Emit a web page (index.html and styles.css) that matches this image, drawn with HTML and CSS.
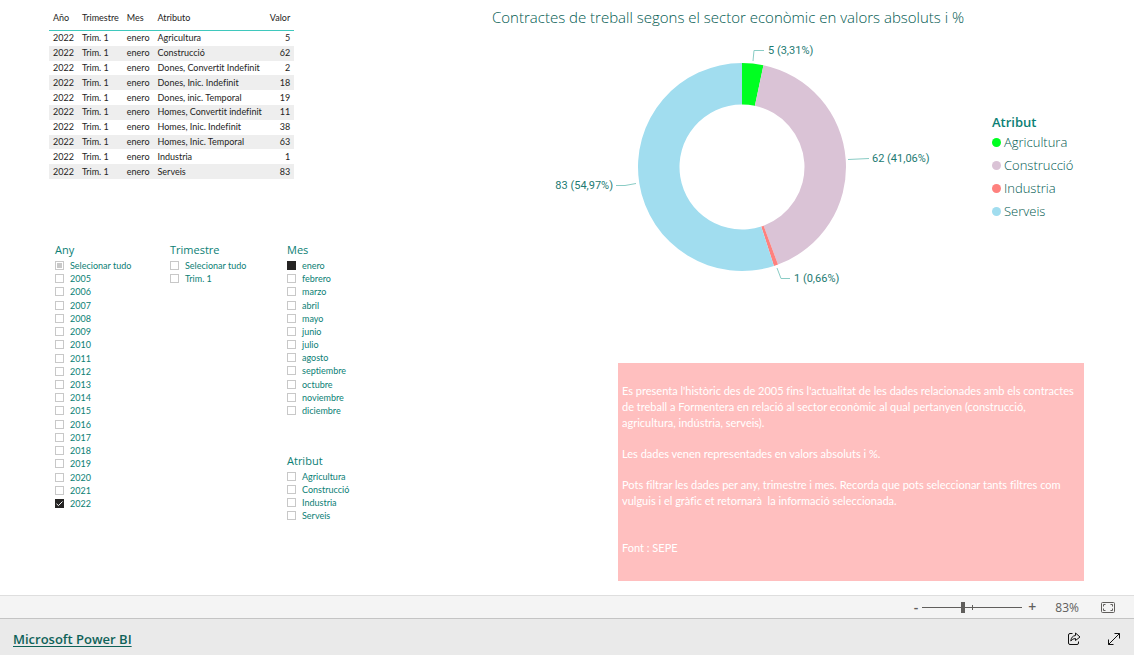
FILE: index.html
```html
<!DOCTYPE html>
<html lang="ca">
<head>
<meta charset="utf-8">
<meta name="viewport" content="width=device-width, initial-scale=1">
<title>Contractes de treball segons el sector econòmic</title>
<link rel="stylesheet" href="styles.css">
</head>
<body>
<main class="report">
  <section class="side">
    <table class="data">
      <thead><tr><th>Año</th><th>Trimestre</th><th>Mes</th><th>Atributo</th><th class="num">Valor</th></tr></thead>
      <tbody>
        <tr><td>2022</td><td>Trim. 1</td><td>enero</td><td>Agricultura</td><td class="num">5</td></tr>
        <tr><td>2022</td><td>Trim. 1</td><td>enero</td><td>Construcció</td><td class="num">62</td></tr>
        <tr><td>2022</td><td>Trim. 1</td><td>enero</td><td>Dones, Convertit Indefinit</td><td class="num">2</td></tr>
        <tr><td>2022</td><td>Trim. 1</td><td>enero</td><td>Dones, Inic. Indefinit</td><td class="num">18</td></tr>
        <tr><td>2022</td><td>Trim. 1</td><td>enero</td><td>Dones, inic. Temporal</td><td class="num">19</td></tr>
        <tr><td>2022</td><td>Trim. 1</td><td>enero</td><td>Homes, Convertit indefinit</td><td class="num">11</td></tr>
        <tr><td>2022</td><td>Trim. 1</td><td>enero</td><td>Homes, Inic. Indefinit</td><td class="num">38</td></tr>
        <tr><td>2022</td><td>Trim. 1</td><td>enero</td><td>Homes, Inic. Temporal</td><td class="num">63</td></tr>
        <tr><td>2022</td><td>Trim. 1</td><td>enero</td><td>Industria</td><td class="num">1</td></tr>
        <tr><td>2022</td><td>Trim. 1</td><td>enero</td><td>Serveis</td><td class="num">83</td></tr>
      </tbody>
    </table>
    <div class="slicers">
      <fieldset class="slicer">
        <legend>Any</legend>
        <div class="options options-years">
          <label><input type="checkbox" class="partial">Selecionar tudo</label>
          <label><input type="checkbox">2005</label>
          <label><input type="checkbox">2006</label>
          <label><input type="checkbox">2007</label>
          <label><input type="checkbox">2008</label>
          <label><input type="checkbox">2009</label>
          <label><input type="checkbox">2010</label>
          <label><input type="checkbox">2011</label>
          <label><input type="checkbox">2012</label>
          <label><input type="checkbox">2013</label>
          <label><input type="checkbox">2014</label>
          <label><input type="checkbox">2015</label>
          <label><input type="checkbox">2016</label>
          <label><input type="checkbox">2017</label>
          <label><input type="checkbox">2018</label>
          <label><input type="checkbox">2019</label>
          <label><input type="checkbox">2020</label>
          <label><input type="checkbox">2021</label>
          <label class="ticked"><input type="checkbox" checked><svg class="tick" viewBox="0 0 9 9" aria-hidden="true"><path d="M1.5 4.8 3.5 6.6 7.5 2.5"/></svg>2022</label>
        </div>
      </fieldset>
      <fieldset class="slicer">
        <legend>Trimestre</legend>
        <div class="options">
          <label><input type="checkbox">Selecionar tudo</label>
          <label><input type="checkbox">Trim. 1</label>
        </div>
      </fieldset>
      <div class="slicer-stack">
        <fieldset class="slicer">
          <legend>Mes</legend>
          <div class="options options-months">
            <label><input type="checkbox" checked>enero</label>
            <label><input type="checkbox">febrero</label>
            <label><input type="checkbox">marzo</label>
            <label><input type="checkbox">abril</label>
            <label><input type="checkbox">mayo</label>
            <label><input type="checkbox">junio</label>
            <label><input type="checkbox">julio</label>
            <label><input type="checkbox">agosto</label>
            <label><input type="checkbox">septiembre</label>
            <label><input type="checkbox">octubre</label>
            <label><input type="checkbox">noviembre</label>
            <label><input type="checkbox">diciembre</label>
          </div>
        </fieldset>
        <fieldset class="slicer">
          <legend>Atribut</legend>
          <div class="options">
            <label><input type="checkbox">Agricultura</label>
            <label><input type="checkbox">Construcció</label>
            <label><input type="checkbox">Industria</label>
            <label><input type="checkbox">Serveis</label>
          </div>
        </fieldset>
      </div>
    </div>
  </section>

  <section class="content">
    <h1>Contractes de treball segons el sector econòmic en valors absoluts i %</h1>
    <div class="chart">
      <svg class="donut" width="400" height="260" viewBox="-192 -127 400 260" role="img" aria-label="Contractes per sector">
        <path fill="#00ff21" d="M0-104A104 104 0 0 1 21.48-101.76L12.91-61.15A62.5 62.5 0 0 0 0-62.5Z"/>
        <path fill="#dac3d6" d="M21.48-101.76A104 104 0 0 1 36.02 97.56L21.64 58.63A62.5 62.5 0 0 0 12.91-61.15Z"/>
        <path fill="#fe817e" d="M36.02 97.56A104 104 0 0 1 31.93 98.98L19.19 59.48A62.5 62.5 0 0 0 21.64 58.63Z"/>
        <path fill="#a1ddef" d="M31.93 98.98A104 104 0 1 1 0-104V-62.5A62.5 62.5 0 1 0 19.19 59.48Z"/>
        <g class="leader">
          <path d="M11-106 12-116.5H22"/>
          <path d="M106-7.500 127-8.500"/>
          <path d="M35 101 39 111.500H48"/>
          <path d="M-126 18.500H-117L-106 16.500"/>
        </g>
        <g class="value">
          <text x="26" y="-113">5 (3,31%)</text>
          <text x="130" y="-5">62 (41,06%)</text>
          <text x="52" y="115">1 (0,66%)</text>
          <text x="-129" y="22" text-anchor="end">83 (54,97%)</text>
        </g>
      </svg>
      <div class="key">
        <h2>Atribut</h2>
        <ul>
          <li class="agricultura">Agricultura</li>
          <li class="construccio">Construcció</li>
          <li class="industria">Industria</li>
          <li class="serveis">Serveis</li>
        </ul>
      </div>
    </div>
    <div class="note">
      <p>Es presenta l'històric des de 2005 fins l'actualitat de les dades relacionades amb els contractes<br>de treball a Formentera en relació al sector econòmic al qual pertanyen (construcció,<br>agricultura, indústria, serveis).</p>
      <p>Les dades venen representades en valors absoluts i %.</p>
      <p>Pots filtrar les dades per any, trimestre i mes. Recorda que pots seleccionar tants filtres com<br>vulguis i el gràfic et retornarà &nbsp;la informació seleccionada.</p>
      <p class="source">Font : SEPE</p>
    </div>
  </section>
</main>

<div class="zoombar">
  <button type="button" class="step minus" aria-label="Zoom out">-</button>
  <input type="range" class="slider" min="0" max="100" value="40" aria-label="Zoom">
  <button type="button" class="step plus" aria-label="Zoom in">+</button>
  <span class="percent">83%</span>
  <button type="button" class="fit" aria-label="Fit to page">
    <svg width="14" height="11" viewBox="0 0 14 11"><rect x=".5" y=".5" width="13" height="10" rx="1"/><path d="M2.500 4.500V2.500H4.500M9.500 2.500H11.500V4.500M11.500 6.500V8.500H9.500M4.500 8.500H2.500V6.500"/></svg>
  </button>
</div>
<footer class="footer">
  <a href="#">Microsoft Power BI</a>
  <div class="actions">
    <button type="button" aria-label="Share"><svg width="14" height="14" viewBox="0 0 14 14"><path d="M5.500 1.500H3Q1.500 1.500 1.500 3V11Q1.500 12.500 3 12.500H10Q11.500 12.500 11.500 11V9.500M8.500 1 13 5 8.500 8.500V6.500Q5.500 6.500 3.800 9 4.200 4 8.500 3.500Z"/></svg></button>
    <button type="button" aria-label="Full screen"><svg width="14" height="14" viewBox="0 0 14 14"><path d="M1.500 12.500 12.500 1.500M7.500 1.500H12.500V6.500M1.500 7.500V12.500H6.500"/></svg></button>
  </div>
</footer>
</body>
</html>
```
FILE: styles.css
```css
* {
  box-sizing: border-box;
}

body {
  margin: 0;
  min-height: 100vh;
  display: flex;
  flex-direction: column;
  background: #fff;
  color: #0b8075;
  font-family: "Open Sans", "Noto Sans", sans-serif;
  font-variant-ligatures: none;
}

h1, h2, p, ul, fieldset, legend {
  margin: 0;
  padding: 0;
  border: 0;
}

button {
  padding: 0;
  border: 0;
  background: none;
  font: inherit;
  color: inherit;
  display: flex;
}

.report {
  flex: 1;
  display: grid;
  grid-template-columns: 443px 1fr;
  padding: 5px 50px 14px 49px;
}

/* Data table */
.data {
  width: 244px;
  height: 174px;
  border-collapse: separate;
  border-spacing: 0;
  color: #252423;
  font-family: Lato, sans-serif;
  font-size: 9px;
  line-height: 14px;
  white-space: nowrap;
}

.data th {
  height: 26px;
  padding: 0 4px;
  border-bottom: 1px solid #3fc8bd;
  font-weight: 400;
  text-align: left;
}

.data td {
  padding: 0 4px;
}

.data tbody tr:nth-child(even) {
  background: #eee;
}

.data .num {
  text-align: right;
}

/* Slicers */
.slicers {
  display: grid;
  grid-template-columns: 115px 117px 1fr;
  align-items: start;
  padding: 63px 0 0 6px;
}

.slicer legend {
  padding-bottom: 2px;
  font-size: 11px;
  line-height: 15px;
}

.slicer-stack {
  display: grid;
  gap: 36px;
}

.options {
  display: grid;
  align-content: space-between;
  font-family: Lato, sans-serif;
  font-size: 9px;
  line-height: 13px;
}

.options-years {
  min-height: 251px;
}

.options-months {
  min-height: 158px;
}

.options label {
  display: flex;
  align-items: center;
  gap: 6px;
  white-space: nowrap;
}

.options input {
  appearance: none;
  width: 9px;
  height: 9px;
  margin: 0;
  border: 1px solid #c8c8c8;
  background: #fff;
}

.options input:checked {
  border-color: #252423;
  background: #252423;
}

.options .partial {
  background: #c8c8c8;
  box-shadow: inset 0 0 0 1px #fff;
}

.ticked {
  position: relative;
}

.tick {
  position: absolute;
  left: 0;
  width: 9px;
  height: 9px;
  fill: none;
  stroke: #fff;
}

/* Chart */
.content {
  display: flex;
  flex-direction: column;
}

h1 {
  color: #00594f;
  font-size: 15px;
  font-weight: 300;
  line-height: 24px;
  white-space: nowrap;
}

.chart {
  display: flex;
  gap: 42px;
  padding: 11px 0 0 58px;
}

.donut {
  flex: none;
}

.leader {
  fill: none;
  stroke: #8accc5;
}

.value {
  fill: #1d7a72;
  font-family: Roboto, sans-serif;
  font-size: 11px;
}

.key {
  padding-top: 74px;
  font-size: 13px;
}

.key h2 {
  font-size: 13px;
  font-weight: 600;
  line-height: 17px;
}

.key ul {
  list-style: none;
}

.key li {
  display: flex;
  align-items: center;
  gap: 3px;
  color: #00594f;
  font-weight: 300;
  line-height: 23px;
}

.key li::before {
  content: "";
  width: 9px;
  height: 9px;
  border-radius: 50%;
  background: currentColor;
}

.key .agricultura::before {
  color: #00ff21;
}

.key .construccio::before {
  color: #dac3d6;
}

.key .industria::before {
  color: #fe817e;
}

.key .serveis::before {
  color: #a1ddef;
}

.note {
  display: grid;
  gap: 15px;
  margin: 63px 0 0 126px;
  padding: 20px 4px 25px;
  background: #ffbfbf;
  color: #fff;
  font-family: Lato, sans-serif;
  font-size: 11px;
  line-height: 16px;
  white-space: nowrap;
}

.note .source {
  padding-top: 16px;
}

/* Bars */
.zoombar {
  display: flex;
  align-items: center;
  justify-content: flex-end;
  height: 24px;
  padding-right: 19px;
  border: solid #dedede;
  border-width: 1px 0;
  border-bottom-color: #c4c4c4;
  background: #f4f4f4;
  color: #605e5c;
  font-size: 12px;
}

.step {
  font-size: 14px;
  font-weight: 600;
  line-height: 20px;
}

.slider {
  appearance: none;
  width: 100px;
  height: 11px;
  margin: 0 6px 0 4px;
  background:
    linear-gradient(#605e5c, #605e5c) 50px 50% / 1px 5px no-repeat,
    linear-gradient(#605e5c, #605e5c) 0 50% / 100% 1px no-repeat;
}

.slider::-webkit-slider-thumb {
  appearance: none;
  width: 4px;
  height: 11px;
  background: #605e5c;
}

.percent {
  margin: 0 22px 0 19px;
}

.fit svg {
  fill: none;
  stroke: #605e5c;
}

.footer {
  display: flex;
  align-items: center;
  justify-content: space-between;
  height: 36px;
  padding: 4px 13px 0;
  background: #eaeaea;
  color: #111;
}

.footer a {
  color: #0f6259;
  font-size: 13px;
  font-weight: 600;
  text-underline-offset: 2px;
}

.actions {
  display: flex;
  gap: 26px;
}

.actions svg {
  fill: none;
  stroke: currentColor;
}
```
